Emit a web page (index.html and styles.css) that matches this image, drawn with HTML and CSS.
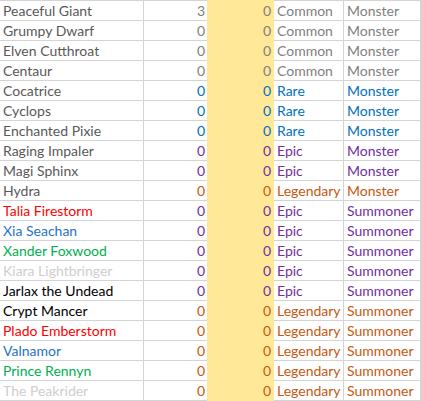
FILE: index.html
```html
<!DOCTYPE html>
<html>
<head>
<meta charset="utf-8">
<link rel="stylesheet" href="styles.css">
</head>
<body>
<div class="sheet">
  <div class="row common"><div class="c name gray">Peaceful Giant</div><div class="c num">3</div><div class="c num hl">0</div><div class="c txt">Common</div><div class="c txt last">Monster</div></div>
  <div class="row common"><div class="c name gray">Grumpy Dwarf</div><div class="c num">0</div><div class="c num hl">0</div><div class="c txt">Common</div><div class="c txt last">Monster</div></div>
  <div class="row common"><div class="c name gray">Elven Cutthroat</div><div class="c num">0</div><div class="c num hl">0</div><div class="c txt">Common</div><div class="c txt last">Monster</div></div>
  <div class="row common"><div class="c name gray">Centaur</div><div class="c num">0</div><div class="c num hl">0</div><div class="c txt">Common</div><div class="c txt last">Monster</div></div>
  <div class="row rare"><div class="c name gray">Cocatrice</div><div class="c num">0</div><div class="c num hl">0</div><div class="c txt">Rare</div><div class="c txt last">Monster</div></div>
  <div class="row rare"><div class="c name gray">Cyclops</div><div class="c num">0</div><div class="c num hl">0</div><div class="c txt">Rare</div><div class="c txt last">Monster</div></div>
  <div class="row rare"><div class="c name gray">Enchanted Pixie</div><div class="c num">0</div><div class="c num hl">0</div><div class="c txt">Rare</div><div class="c txt last">Monster</div></div>
  <div class="row epic"><div class="c name gray">Raging Impaler</div><div class="c num">0</div><div class="c num hl">0</div><div class="c txt">Epic</div><div class="c txt last">Monster</div></div>
  <div class="row epic"><div class="c name gray">Magi Sphinx</div><div class="c num">0</div><div class="c num hl">0</div><div class="c txt">Epic</div><div class="c txt last">Monster</div></div>
  <div class="row legendary"><div class="c name gray">Hydra</div><div class="c num">0</div><div class="c num hl">0</div><div class="c txt">Legendary</div><div class="c txt last">Monster</div></div>
  <div class="row epic"><div class="c name red">Talia Firestorm</div><div class="c num">0</div><div class="c num hl">0</div><div class="c txt">Epic</div><div class="c txt last">Summoner</div></div>
  <div class="row epic"><div class="c name blue">Xia Seachan</div><div class="c num">0</div><div class="c num hl">0</div><div class="c txt">Epic</div><div class="c txt last">Summoner</div></div>
  <div class="row epic"><div class="c name green">Xander Foxwood</div><div class="c num">0</div><div class="c num hl">0</div><div class="c txt">Epic</div><div class="c txt last">Summoner</div></div>
  <div class="row epic"><div class="c name light">Kiara Lightbringer</div><div class="c num">0</div><div class="c num hl">0</div><div class="c txt">Epic</div><div class="c txt last">Summoner</div></div>
  <div class="row epic"><div class="c name black">Jarlax the Undead</div><div class="c num">0</div><div class="c num hl">0</div><div class="c txt">Epic</div><div class="c txt last">Summoner</div></div>
  <div class="row legendary"><div class="c name black">Crypt Mancer</div><div class="c num">0</div><div class="c num hl">0</div><div class="c txt">Legendary</div><div class="c txt last">Summoner</div></div>
  <div class="row legendary"><div class="c name red">Plado Emberstorm</div><div class="c num">0</div><div class="c num hl">0</div><div class="c txt">Legendary</div><div class="c txt last">Summoner</div></div>
  <div class="row legendary"><div class="c name blue">Valnamor</div><div class="c num">0</div><div class="c num hl">0</div><div class="c txt">Legendary</div><div class="c txt last">Summoner</div></div>
  <div class="row legendary"><div class="c name green">Prince Rennyn</div><div class="c num">0</div><div class="c num hl">0</div><div class="c txt">Legendary</div><div class="c txt last">Summoner</div></div>
  <div class="row legendary"><div class="c name light">The Peakrider</div><div class="c num">0</div><div class="c num hl">0</div><div class="c txt">Legendary</div><div class="c txt last">Summoner</div></div>
</div>
</body>
</html>
```

FILE: styles.css
```css
html, body {
  margin: 0;
  padding: 0;
  background: #ffffff;
}
.sheet {
  width: 421px;
  border-top: 1px solid #d4d4d4;
  font-family: "Lato", "Liberation Sans", sans-serif;
  font-size: 14px;
}
.row {
  display: grid;
  grid-template-columns: 144px 63px 67px 70px 77px;
  height: 20px;
}
.c {
  box-sizing: border-box;
  height: 20px;
  border-bottom: 1px solid #d4d4d4;
  border-right: 1px solid #d4d4d4;
  line-height: 19px;
  white-space: nowrap;
  overflow: hidden;
}
.name { padding-left: 3px; }
.num { text-align: right; padding-right: 2px; border-right: none; }
.hl {
  background: #ffe999;
  border-right: 1px solid #ffe999;
  border-bottom-color: #ffe999;
  margin-top: -1px;
  height: 21px;
  padding-top: 1px;
}
.txt { padding-left: 3px; }
.gray { color: #595959; }
.red { color: #ff0000; }
.blue { color: #1f73c8; }
.green { color: #00b050; }
.light { color: #cfcdcd; }
.black { color: #000000; }
.common .num, .common .txt { color: #808080; }
.rare .num, .rare .txt { color: #0070c0; }
.epic .num, .epic .txt { color: #7030a0; }
.legendary .num, .legendary .txt { color: #c65911; }
```
